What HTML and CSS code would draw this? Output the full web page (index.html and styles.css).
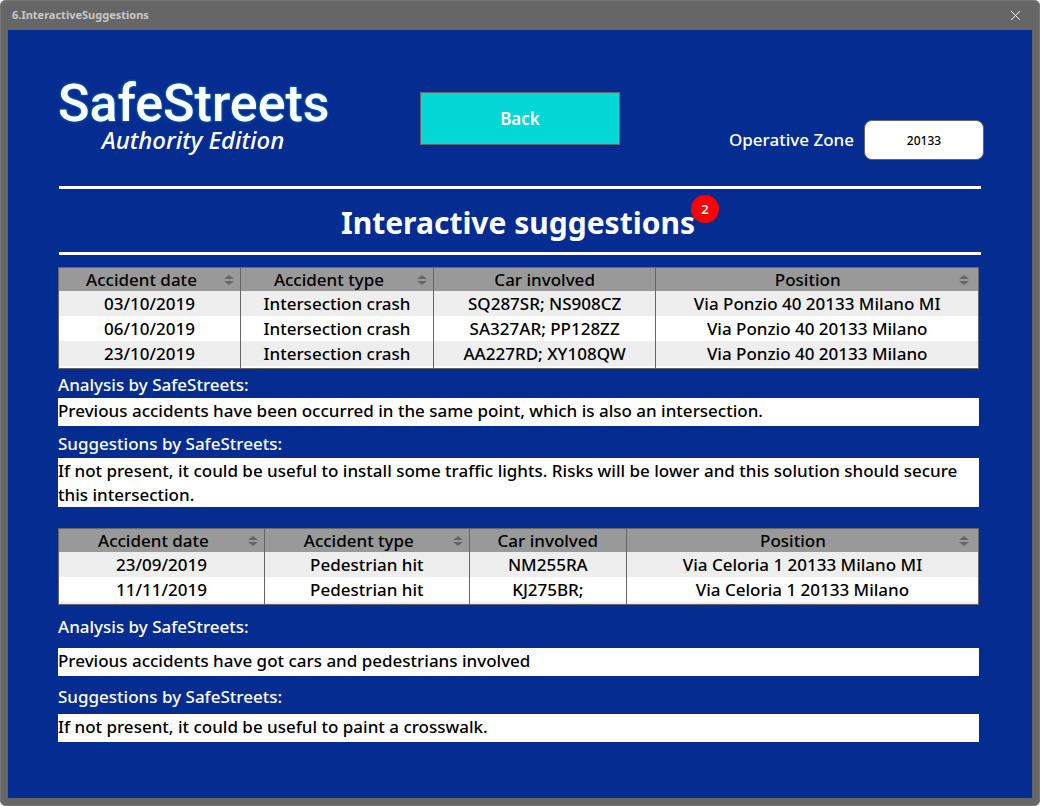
FILE: index.html
```
<!DOCTYPE html>
<html lang="en">
<head>
<meta charset="utf-8">
<title>6.InteractiveSuggestions</title>
<link rel="stylesheet" href="styles.css">
</head>
<body>
<div class="window">
  <div class="titlebar">
    <span class="titlebar-name">6.InteractiveSuggestions</span>
    <button class="close" type="button" aria-label="Close"><svg width="11" height="11" viewBox="0 0 11 11"><path d="M1 1l9 9M10 1l-9 9" stroke="#fff" stroke-width="1" fill="none"/></svg></button>
  </div>
  <main class="canvas">
    <header class="header">
      <div class="brand">
        <div class="brand-name">SafeStreets</div>
        <div class="brand-edition">Authority Edition</div>
      </div>
      <button class="back" type="button">Back</button>
      <div class="zone">
        <label for="zone">Operative Zone</label>
        <input id="zone" type="text" value="20133">
      </div>
    </header>

    <div class="heading">
      <h1>Interactive suggestions<span class="badge">2</span></h1>
    </div>

    <section class="report">
      <table>
        <colgroup><col class="a-date"><col class="a-type"><col class="a-car"><col></colgroup>
        <thead>
          <tr>
            <th><button class="sort" type="button">Accident date<svg width="10" height="10" viewBox="0 0 10 10"><path d="M5 0l5 4H0zM5 10L0 6h10z"/></svg></button></th>
            <th><button class="sort" type="button">Accident type<svg width="10" height="10" viewBox="0 0 10 10"><path d="M5 0l5 4H0zM5 10L0 6h10z"/></svg></button></th>
            <th>Car involved</th>
            <th><button class="sort" type="button">Position<svg width="10" height="10" viewBox="0 0 10 10"><path d="M5 0l5 4H0zM5 10L0 6h10z"/></svg></button></th>
          </tr>
        </thead>
        <tbody>
          <tr><td>03/10/2019</td><td>Intersection crash</td><td>SQ287SR; NS908CZ</td><td>Via Ponzio 40 20133 Milano MI</td></tr>
          <tr><td>06/10/2019</td><td>Intersection crash</td><td>SA327AR; PP128ZZ</td><td>Via Ponzio 40 20133 Milano</td></tr>
          <tr><td>23/10/2019</td><td>Intersection crash</td><td>AA227RD; XY108QW</td><td>Via Ponzio 40 20133 Milano</td></tr>
          <tr class="rest" aria-hidden="true"><td></td><td></td><td></td><td></td></tr>
        </tbody>
      </table>
      <h2>Analysis by SafeStreets:</h2>
      <p>Previous accidents have been occurred in the same point, which is also an intersection.</p>
      <h2>Suggestions by SafeStreets:</h2>
      <p>If not present, it could be useful to install some traffic lights. Risks will be lower and this solution should secure this intersection.</p>
    </section>

    <section class="report report-loose">
      <table>
        <colgroup><col class="b-date"><col class="b-type"><col class="b-car"><col></colgroup>
        <thead>
          <tr>
            <th><button class="sort" type="button">Accident date<svg width="10" height="10" viewBox="0 0 10 10"><path d="M5 0l5 4H0zM5 10L0 6h10z"/></svg></button></th>
            <th><button class="sort" type="button">Accident type<svg width="10" height="10" viewBox="0 0 10 10"><path d="M5 0l5 4H0zM5 10L0 6h10z"/></svg></button></th>
            <th>Car involved</th>
            <th><button class="sort" type="button">Position<svg width="10" height="10" viewBox="0 0 10 10"><path d="M5 0l5 4H0zM5 10L0 6h10z"/></svg></button></th>
          </tr>
        </thead>
        <tbody>
          <tr><td>23/09/2019</td><td>Pedestrian hit</td><td>NM255RA</td><td>Via Celoria 1 20133 Milano MI</td></tr>
          <tr><td>11/11/2019</td><td>Pedestrian hit</td><td>KJ275BR;</td><td>Via Celoria 1 20133 Milano</td></tr>
          <tr class="rest" aria-hidden="true"><td></td><td></td><td></td><td></td></tr>
        </tbody>
      </table>
      <h2>Analysis by SafeStreets:</h2>
      <p>Previous accidents have got cars and pedestrians involved</p>
      <h2>Suggestions by SafeStreets:</h2>
      <p>If not present, it could be useful to paint a crosswalk.</p>
    </section>
  </main>
</div>
</body>
</html>
```
FILE: styles.css
```
* { box-sizing: border-box; }

body {
  margin: 0;
  background: #fff;
  color: #000;
  font: 500 17px/24px "Noto Sans", "Open Sans", sans-serif;
}

button, input { font: inherit; }

.window {
  display: flex;
  flex-direction: column;
  min-height: 100vh;
  padding: 0 8px 8px;
  background: #666;
  border-radius: 6px;
  box-shadow: inset 0 0 0 1px #777;
}

.titlebar {
  display: flex;
  align-items: center;
  justify-content: space-between;
  height: 30px;
  padding: 0 10px 0 4px;
}

.titlebar-name {
  color: #c8c8c8;
  font-size: 11px;
  font-weight: 700;
}

.close {
  display: flex;
  padding: 1px;
  border: 0;
  background: none;
}

.canvas {
  flex: 1;
  padding: 50px 0;
  background: #052d91;
}

.header {
  display: grid;
  grid-template-columns: 1fr 200px 1fr;
  align-items: start;
  margin: 0 50px;
  padding-bottom: 26px;
}

.brand {
  width: 270px;
  color: #fff;
  text-align: center;
}

.brand-name {
  font: 500 52px/48px Roboto, sans-serif;
  text-shadow: 0 0 2px #05d7d7;
}

.brand-edition {
  font-size: 24px;
  font-style: italic;
}

.back {
  height: 53px;
  margin-top: 12px;
  padding-top: 2px;
  border: 1px solid #666;
  background: #05d7d7;
  color: #fff;
  font-weight: 600;
}

.zone {
  display: flex;
  align-items: center;
  justify-content: flex-end;
  gap: 10px;
  margin: 40px -2px 0 0;
  color: #fff;
}

.zone input {
  width: 120px;
  height: 40px;
  border: 1px solid #666;
  border-radius: 8px;
  background: #fff;
  font-size: 12px;
  text-align: center;
}

.heading {
  margin: 0 51px;
  padding: 4px 4px 0 0;
  border-top: 3px solid #fff;
  border-bottom: 3px solid #fff;
  color: #fff;
  text-align: center;
}

h1 {
  position: relative;
  display: inline-block;
  margin: 0;
  font-size: 30px;
  font-weight: 700;
  line-height: 59px;
  vertical-align: top;
}

.badge {
  position: absolute;
  top: 2px;
  left: 100%;
  width: 28px;
  height: 28px;
  margin-left: -4px;
  border-radius: 50%;
  background: #f00;
  font-size: 13px;
  font-weight: 600;
  line-height: 28px;
}

.report { margin: 12px 53px 0 50px; }
.report-loose { margin-top: 21px; }

table {
  width: 100%;
  border: 1px solid #666;
  border-spacing: 0;
  table-layout: fixed;
  background: #fff;
  text-align: center;
}

.a-date { width: 19.8%; }
.a-type { width: 21%; }
.a-car { width: 24.2%; }
.b-date { width: 22.4%; }
.b-type { width: 22.3%; }
.b-car { width: 17.1%; }

th, td {
  height: 25px;
  padding: 0;
  border-right: 1px solid #666;
}

td { padding-top: 1px; }

th:last-child, td:last-child { border-right: 0; }

th {
  height: 23px;
  background: #999;
  font-weight: 500;
  line-height: 23px;
}

.sort {
  display: grid;
  grid-template-columns: 1fr 10px;
  align-items: center;
  width: 100%;
  padding: 0 6px 0 0;
  border: 0;
  background: none;
  color: inherit;
}

th:last-child .sort { padding-right: 9px; }

.sort svg { fill: #666; }

tbody tr:nth-child(odd) { background: #eee; }

.rest td { height: 2px; }

h2 {
  margin: 6px 0 2px;
  color: #fff;
  font-size: 17px;
  font-weight: 500;
}

table + h2 { margin: 4px 0 1px; }

p {
  min-height: 28px;
  margin: 0;
  padding-top: 1px;
  background: #fff;
}

.report-loose h2 { margin: 9px 0 5px; }
.report-loose table + h2 { margin: 10px 0 9px; }
```
